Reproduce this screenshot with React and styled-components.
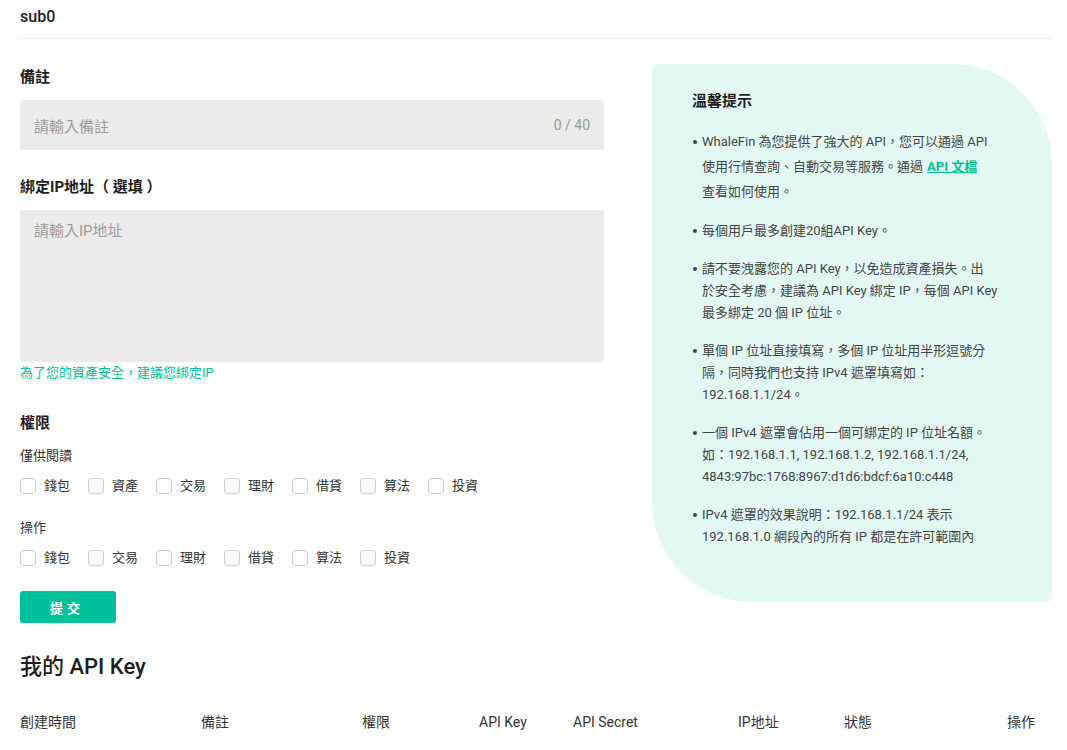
import styled, { createGlobalStyle } from "styled-components";

const GlobalStyle = createGlobalStyle`
  body {
    margin: 0;
    background: #fff;
    font-family: Roboto, "Noto Sans CJK TC", sans-serif;
    color: #1e1e1e;
  }
`;

const Page = styled.div`
  padding: 0 15px 0 20px;
`;

const Header = styled.div`
  height: 39px;
  display: flex;
  align-items: center;
  font-size: 16px;
  font-weight: 500;
  border-bottom: 1px solid #ececec;
  padding-bottom: 6px;
  box-sizing: border-box;
`;

const Main = styled.div`
  display: flex;
  justify-content: space-between;
  padding-top: 25px;
`;

const FormCol = styled.div`
  width: 584px;
  padding-top: 1px;
`;

const Label = styled.div`
  font-size: 15px;
  font-weight: 700;
  line-height: 24px;
  margin-bottom: ${(p) => p.$mb || 11}px;
`;

const InputBox = styled.div`
  height: 50px;
  background: #ebebeb;
  border-radius: 4px;
  display: flex;
  align-items: center;
  justify-content: space-between;
  padding: 0 14px;
  font-size: 15px;
  color: #9b9b9b;
  margin-bottom: 25px;
`;

const Counter = styled.span`
  font-size: 14px;
`;

const AreaBox = styled.div`
  height: 152px;
  background: #ebebeb;
  border-radius: 4px;
  box-sizing: border-box;
  padding: 9px 14px;
  font-size: 15px;
  color: #9b9b9b;
`;

const Hint = styled.div`
  margin-top: 3px;
  font-size: 13px;
  line-height: 16px;
  color: #00c096;
  margin-bottom: 30px;
`;

const SubLabel = styled.div`
  font-size: 13px;
  line-height: 18px;
  color: #333;
  margin-bottom: 12px;
`;

const CheckRow = styled.div`
  display: flex;
  align-items: center;
  margin-bottom: 24px;
`;

const CheckItem = styled.label`
  display: flex;
  align-items: center;
  gap: 8px;
  margin-right: 18px;
  font-size: 13px;
  color: #333;
  line-height: 18px;
`;

const Box = styled.span`
  width: 14px;
  height: 14px;
  border: 1px solid #c8c8c8;
  border-radius: 4px;
  background: #fff;
`;

const Submit = styled.button`
  display: block;
  width: 96px;
  height: 32px;
  margin-top: 4px;
  border: none;
  border-radius: 3px;
  background: #00c29a;
  color: #fff;
  font-family: inherit;
  font-size: 13px;
  font-weight: 700;
  letter-spacing: 4px;
  padding-left: 4px;
`;

const Tips = styled.div`
  width: 400px;
  height: 538px;
  box-sizing: border-box;
  background: #e3f8f3;
  border-radius: 6px 100px 6px 100px;
  padding: 27px 20px 0 40px;
`;

const TipsTitle = styled.div`
  font-size: 15px;
  font-weight: 700;
  line-height: 20px;
  margin-bottom: 18px;
`;

const TipList = styled.ul`
  margin: 0;
  padding: 0;
  list-style: none;
`;

const Tip = styled.li`
  position: relative;
  padding-left: 10px;
  font-size: 13px;
  line-height: ${(p) => p.$lh || 22}px;
  color: #444;
  margin-bottom: 16px;
  white-space: nowrap;

  &::before {
    content: "";
    position: absolute;
    left: 1px;
    top: ${(p) => ((p.$lh || 22) - 4) / 2}px;
    width: 4px;
    height: 4px;
    border-radius: 50%;
    background: #444;
  }
`;

const DocLink = styled.a`
  color: #00c096;
  font-weight: 700;
  text-decoration: underline;
  margin-left: 4px;
`;

const SectionTitle = styled.h2`
  margin: 24px 0 0;
  font-size: 22px;
  font-weight: 500;
  line-height: 40px;
`;

const TableHead = styled.div`
  display: grid;
  grid-template-columns: 181px 161px 117px 94px 165px 106px 1fr auto;
  padding: 25px 17px 0 0;
  font-size: 14px;
  color: #333;
  line-height: 20px;
`;

const readOnly = ["錢包", "資產", "交易", "理財", "借貸", "算法", "投資"];
const operate = ["錢包", "交易", "理財", "借貸", "算法", "投資"];
const columns = ["創建時間", "備註", "權限", "API Key", "API Secret", "IP地址", "狀態", "操作"];

function Checks({ items }) {
  return (
    <CheckRow>
      {items.map((t) => (
        <CheckItem key={t}>
          <Box />
          {t}
        </CheckItem>
      ))}
    </CheckRow>
  );
}

export default function App() {
  return (
    <Page>
      <GlobalStyle />
      <Header>sub0</Header>
      <Main>
        <FormCol>
          <Label>備註</Label>
          <InputBox>
            <span>請輸入備註</span>
            <Counter>0 / 40</Counter>
          </InputBox>
          <Label>綁定IP地址（ 選填 ）</Label>
          <AreaBox>請輸入IP地址</AreaBox>
          <Hint>為了您的資產安全，建議您綁定IP</Hint>
          <Label $mb={12}>權限</Label>
          <SubLabel>僅供閱讀</SubLabel>
          <Checks items={readOnly} />
          <SubLabel>操作</SubLabel>
          <Checks items={operate} />
          <Submit>提交</Submit>
        </FormCol>
        <Tips>
          <TipsTitle>溫馨提示</TipsTitle>
          <TipList>
            <Tip $lh={25}>
              WhaleFin 為您提供了強大的 API，您可以通過 API
              <br />
              使用行情查詢、自動交易等服務。通過
              <DocLink>API 文檔</DocLink>
              <br />
              查看如何使用。
            </Tip>
            <Tip>每個用戶最多創建20組API Key。</Tip>
            <Tip>
              請不要洩露您的 API Key，以免造成資產損失。出
              <br />
              於安全考慮，建議為 API Key 綁定 IP，每個 API Key
              <br />
              最多綁定 20 個 IP 位址。
            </Tip>
            <Tip>
              單個 IP 位址直接填寫，多個 IP 位址用半形逗號分
              <br />
              隔，同時我們也支持 IPv4 遮罩填寫如：
              <br />
              192.168.1.1/24。
            </Tip>
            <Tip>
              一個 IPv4 遮罩會佔用一個可綁定的 IP 位址名額。
              <br />
              如：192.168.1.1, 192.168.1.2, 192.168.1.1/24,
              <br />
              4843:97bc:1768:8967:d1d6:bdcf:6a10:c448
            </Tip>
            <Tip>
              IPv4 遮罩的效果說明：192.168.1.1/24 表示
              <br />
              192.168.1.0 網段內的所有 IP 都是在許可範圍內
            </Tip>
          </TipList>
        </Tips>
      </Main>
      <SectionTitle>我的 API Key</SectionTitle>
      <TableHead>
        {columns.map((c) => (
          <span key={c}>{c}</span>
        ))}
      </TableHead>
    </Page>
  );
}
